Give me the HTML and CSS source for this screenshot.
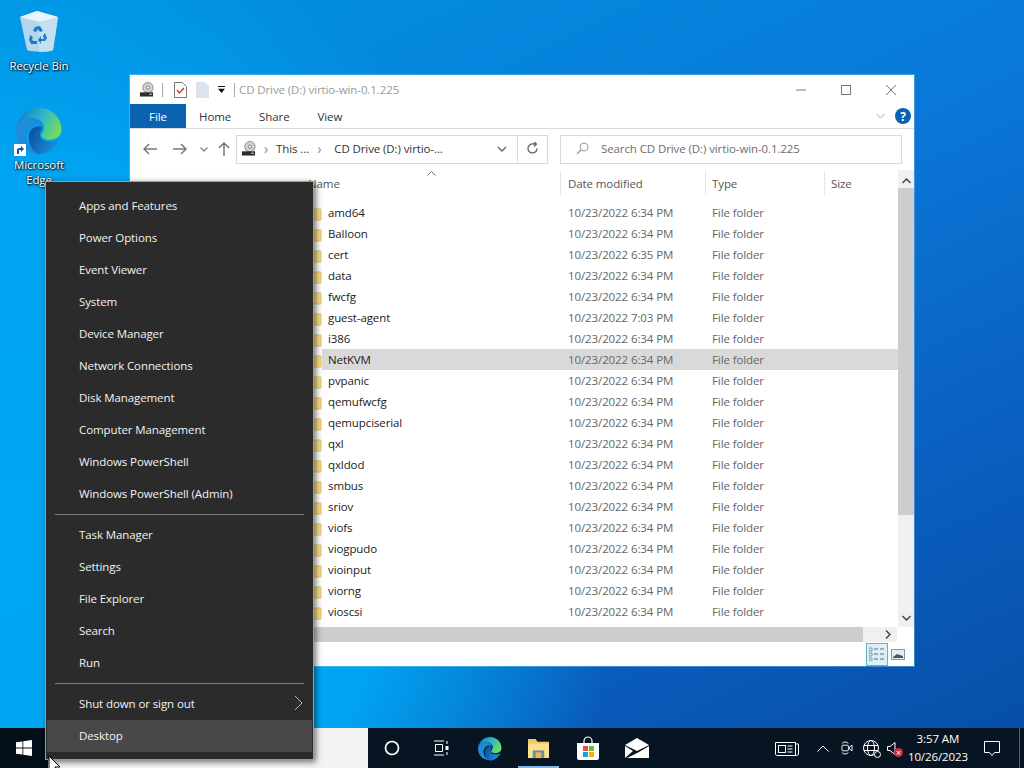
FILE: index.html
```html
<!DOCTYPE html>
<html lang="en">
<head>
    <meta charset="UTF-8">
    <title>CD Drive (D:) virtio-win-0.1.225</title>
    <link rel="stylesheet" href="styles.css">
</head>
<body>
    <svg class="defs" width="0" height="0">
        <defs>
            <linearGradient id="edgeTop" x1="0" y1="0.2" x2="1" y2="0.6">
                <stop offset="0" stop-color="#0f78bd"/>
                <stop offset="0.5" stop-color="#2fb4cf"/>
                <stop offset="1" stop-color="#72de5a"/>
            </linearGradient>
            <linearGradient id="edgeLow" x1="0" y1="0" x2="1" y2="0.5">
                <stop offset="0" stop-color="#0b4a96"/>
                <stop offset="1" stop-color="#1b8de0"/>
            </linearGradient>
            <symbol id="edge" viewBox="0 0 48 48">
                <path d="M2 22C5 9 14 2 25 2c13 0 22 10 22 21 0 6-5 10-12 10-5 0-8-2-8-4s3-3 3-8c0-6-7-10-14-9C9 13 4 17 2 22z" fill="url(#edgeTop)"/>
                <path d="M2 22c2-6 8-10 15-10 6 0 11 3 12 7-7-3-15 1-16 9-1 8 3 14 10 18C11 46 1 36 2 22z" fill="#1e8cd8"/>
                <path d="M15 30c0-7 6-11 13-10 0 4-2 6-2 8 0 5 5 7 10 7 4 0 7-1 9-3-3 9-12 15-20 15-6-1-10-9-10-17z" fill="url(#edgeLow)"/>
            </symbol>
            <symbol id="drive" viewBox="0 0 16 16">
                <circle cx="9.500" cy="6" r="5.500" fill="#d2d2d2" stroke="#858585"/>
                <circle cx="9.500" cy="6" r="1.700" fill="#fff" stroke="#777"/>
                <rect x="1" y="11" width="14" height="4.500" fill="#2e2e2e"/>
                <rect x="11" y="12.500" width="2.500" height="1" fill="#fff"/>
            </symbol>
            <symbol id="folder" viewBox="0 0 18 16">
                <path d="M1 2h6l2 2h8v11H1z" fill="#fbe08a" stroke="#e3c46a"/>
            </symbol>
        </defs>
    </svg>

    <div class="screen">
        <div class="desktop">
            <div class="shortcut bin-shortcut">
                <svg width="40" height="42" viewBox="0 0 40 42">
                    <path d="M1 7L18 1l21 6-5 33c-1 2-24 2-26 0z" fill="#b4d6ea"/>
                    <path d="M1 7L18 1l21 6-18 5z" fill="#eaf5fb"/>
                    <path d="M20 12l19-5-5 33c-2 1-8 2-14 2z" fill="#c4dfee"/>
                    <path d="M16 17l5-1 3 5-3 1-2-3-2 3-3-1zM26 23l2 5-2 3h-4v3l-3-4 3-4v3h3l-1-3zM11 25l3 2-1 2 1 2h4v3h-6l-2-4z" fill="#1c7ccb"/>
                </svg>
                <span>Recycle Bin</span>
            </div>
            <div class="shortcut edge-shortcut">
                <div class="edge-logo">
                    <svg width="50" height="49"><use href="#edge"/></svg>
                    <div class="link-badge">
                        <svg width="10" height="10" viewBox="0 0 10 10"><path d="M2 9V5c0-1 1-2 2-2h2V1l3 3-3 3V5H4v4z" fill="#1a4f95"/></svg>
                    </div>
                </div>
                <span>Microsoft Edge</span>
            </div>

            <div class="window">
                <div class="title-bar">
                    <svg class="qa-drive" width="15" height="15"><use href="#drive"/></svg>
                    <i class="qa-sep"></i>
                    <svg class="qa-check" width="13" height="16" viewBox="0 0 13 16">
                        <path d="M.5.500h8l4 4v11H.5z" fill="#fff" stroke="#777"/>
                        <path d="M3 8l2.500 3L10 6" fill="none" stroke="#d0382c" stroke-width="1.400"/>
                    </svg>
                    <svg class="qa-blank" width="13" height="16" viewBox="0 0 13 16">
                        <path d="M0 0h9l4 4v12H0z" fill="#dbe3ec"/>
                    </svg>
                    <svg class="qa-more" width="7" height="7" viewBox="0 0 8 8">
                        <path d="M0 0h8v1H0zM0 3h8L4 8z" fill="#111"/>
                    </svg>
                    <i class="qa-sep qa-sep-last"></i>
                    <span class="title-text">CD Drive (D:) virtio-win-0.1.225</span>
                    <div class="win-controls">
                        <svg width="10" height="10" viewBox="0 0 10 10"><path d="M0 5h10" stroke="#777"/></svg>
                        <svg width="10" height="10" viewBox="0 0 10 10"><rect x=".5" y=".5" width="9" height="9" fill="none" stroke="#777"/></svg>
                        <svg width="10" height="10" viewBox="0 0 10 10"><path d="M0 0l10 10M10 0L0 10" stroke="#777"/></svg>
                    </div>
                </div>

                <div class="ribbon">
                    <div class="tab tab-file">File</div>
                    <div class="tab tab-home">Home</div>
                    <div class="tab tab-share">Share</div>
                    <div class="tab tab-view">View</div>
                    <svg class="ribbon-chevron" width="9" height="6" viewBox="0 0 9 6"><path d="M.5 1l4 4 4-4" fill="none" stroke="#aaa"/></svg>
                    <div class="help">?</div>
                </div>

                <div class="nav-row">
                    <div class="nav-buttons">
                        <svg width="14" height="12" viewBox="0 0 14 12"><path d="M14 6H1M6 1L1 6l5 5" fill="none" stroke="#777" stroke-width="1.500"/></svg>
                        <svg class="nav-forward" width="14" height="12" viewBox="0 0 14 12"><path d="M0 6h13M8 1l5 5-5 5" fill="none" stroke="#777" stroke-width="1.500"/></svg>
                        <svg class="nav-recent" width="8" height="5" viewBox="0 0 8 5"><path d="M.5.500L4 4 7.500.500" fill="none" stroke="#888" stroke-width="1.300"/></svg>
                        <svg class="nav-up" width="12" height="14" viewBox="0 0 12 14"><path d="M6 14V1M1 6l5-5 5 5" fill="none" stroke="#777" stroke-width="1.500"/></svg>
                    </div>
                    <div class="address">
                        <svg class="addr-drive" width="15" height="15"><use href="#drive"/></svg>
                        <span class="crumb-arrow">›</span>
                        <span class="crumb crumb-pc">This ...</span>
                        <span class="crumb-arrow">›</span>
                        <span class="crumb crumb-cd">CD Drive (D:) virtio-...</span>
                        <svg class="addr-chevron" width="10" height="6" viewBox="0 0 10 6"><path d="M1 1l4 4 4-4" fill="none" stroke="#666" stroke-width="1.400"/></svg>
                        <div class="refresh">
                            <svg width="13" height="13" viewBox="0 0 13 13"><path d="M11 6.500A4.500 4.500 0 1 1 7 2H10M8 0l2.500 2L8 4.500" fill="none" stroke="#666" stroke-width="1.300"/></svg>
                        </div>
                    </div>
                    <div class="search">
                        <svg width="13" height="13" viewBox="0 0 13 13"><circle cx="8" cy="5" r="4" fill="none" stroke="#999"/><path d="M5 8l-4 4" stroke="#999" stroke-width="1.300"/></svg>
                        <span>Search CD Drive (D:) virtio-win-0.1.225</span>
                    </div>
                </div>

                <div class="browser">
                    <div class="file-pane">
                        <div class="sort-caret">
                            <svg width="9" height="5" viewBox="0 0 9 5"><path d="M.5 4.500L4.500.5l4 4" fill="none" stroke="#777"/></svg>
                        </div>
                        <div class="col-heads">
                            <div class="col-head col-name">Name</div>
                            <div class="col-head col-date">Date modified</div>
                            <div class="col-head col-type">Type</div>
                            <div class="col-head col-size">Size</div>
                        </div>
                        <div class="rows">
                            <div class="row"><div class="row-icon"><svg width="18" height="16"><use href="#folder"/></svg></div><div class="row-info"><span class="file-name">amd64</span><span>10/23/2022 6:34 PM</span><span>File folder</span></div></div>
                            <div class="row"><div class="row-icon"><svg width="18" height="16"><use href="#folder"/></svg></div><div class="row-info"><span class="file-name">Balloon</span><span>10/23/2022 6:34 PM</span><span>File folder</span></div></div>
                            <div class="row"><div class="row-icon"><svg width="18" height="16"><use href="#folder"/></svg></div><div class="row-info"><span class="file-name">cert</span><span>10/23/2022 6:35 PM</span><span>File folder</span></div></div>
                            <div class="row"><div class="row-icon"><svg width="18" height="16"><use href="#folder"/></svg></div><div class="row-info"><span class="file-name">data</span><span>10/23/2022 6:34 PM</span><span>File folder</span></div></div>
                            <div class="row"><div class="row-icon"><svg width="18" height="16"><use href="#folder"/></svg></div><div class="row-info"><span class="file-name">fwcfg</span><span>10/23/2022 6:34 PM</span><span>File folder</span></div></div>
                            <div class="row"><div class="row-icon"><svg width="18" height="16"><use href="#folder"/></svg></div><div class="row-info"><span class="file-name">guest-agent</span><span>10/23/2022 7:03 PM</span><span>File folder</span></div></div>
                            <div class="row"><div class="row-icon"><svg width="18" height="16"><use href="#folder"/></svg></div><div class="row-info"><span class="file-name">i386</span><span>10/23/2022 6:34 PM</span><span>File folder</span></div></div>
                            <div class="row row-selected"><div class="row-icon"><svg width="18" height="16"><use href="#folder"/></svg></div><div class="row-info"><span class="file-name">NetKVM</span><span>10/23/2022 6:34 PM</span><span>File folder</span></div></div>
                            <div class="row"><div class="row-icon"><svg width="18" height="16"><use href="#folder"/></svg></div><div class="row-info"><span class="file-name">pvpanic</span><span>10/23/2022 6:34 PM</span><span>File folder</span></div></div>
                            <div class="row"><div class="row-icon"><svg width="18" height="16"><use href="#folder"/></svg></div><div class="row-info"><span class="file-name">qemufwcfg</span><span>10/23/2022 6:34 PM</span><span>File folder</span></div></div>
                            <div class="row"><div class="row-icon"><svg width="18" height="16"><use href="#folder"/></svg></div><div class="row-info"><span class="file-name">qemupciserial</span><span>10/23/2022 6:34 PM</span><span>File folder</span></div></div>
                            <div class="row"><div class="row-icon"><svg width="18" height="16"><use href="#folder"/></svg></div><div class="row-info"><span class="file-name">qxl</span><span>10/23/2022 6:34 PM</span><span>File folder</span></div></div>
                            <div class="row"><div class="row-icon"><svg width="18" height="16"><use href="#folder"/></svg></div><div class="row-info"><span class="file-name">qxldod</span><span>10/23/2022 6:34 PM</span><span>File folder</span></div></div>
                            <div class="row"><div class="row-icon"><svg width="18" height="16"><use href="#folder"/></svg></div><div class="row-info"><span class="file-name">smbus</span><span>10/23/2022 6:34 PM</span><span>File folder</span></div></div>
                            <div class="row"><div class="row-icon"><svg width="18" height="16"><use href="#folder"/></svg></div><div class="row-info"><span class="file-name">sriov</span><span>10/23/2022 6:34 PM</span><span>File folder</span></div></div>
                            <div class="row"><div class="row-icon"><svg width="18" height="16"><use href="#folder"/></svg></div><div class="row-info"><span class="file-name">viofs</span><span>10/23/2022 6:34 PM</span><span>File folder</span></div></div>
                            <div class="row"><div class="row-icon"><svg width="18" height="16"><use href="#folder"/></svg></div><div class="row-info"><span class="file-name">viogpudo</span><span>10/23/2022 6:34 PM</span><span>File folder</span></div></div>
                            <div class="row"><div class="row-icon"><svg width="18" height="16"><use href="#folder"/></svg></div><div class="row-info"><span class="file-name">vioinput</span><span>10/23/2022 6:34 PM</span><span>File folder</span></div></div>
                            <div class="row"><div class="row-icon"><svg width="18" height="16"><use href="#folder"/></svg></div><div class="row-info"><span class="file-name">viorng</span><span>10/23/2022 6:34 PM</span><span>File folder</span></div></div>
                            <div class="row"><div class="row-icon"><svg width="18" height="16"><use href="#folder"/></svg></div><div class="row-info"><span class="file-name">vioscsi</span><span>10/23/2022 6:34 PM</span><span>File folder</span></div></div>
                        </div>
                    </div>
                    <div class="vbar">
                        <svg class="vbar-arrow" width="9" height="6" viewBox="0 0 9 6"><path d="M.5 5l4-4 4 4" fill="none" stroke="#444" stroke-width="1.500"/></svg>
                        <div class="vbar-thumb"></div>
                        <svg class="vbar-arrow vbar-arrow-down" width="9" height="6" viewBox="0 0 9 6"><path d="M.5 1l4 4 4-4" fill="none" stroke="#444" stroke-width="1.500"/></svg>
                    </div>
                </div>

                <div class="hbar">
                    <div class="hbar-thumb"></div>
                    <svg class="hbar-arrow" width="6" height="9" viewBox="0 0 6 9"><path d="M1 .5l4 4-4 4" fill="none" stroke="#444" stroke-width="1.500"/></svg>
                </div>

                <div class="status-bar">
                    <div class="view-btn view-btn-on">
                        <svg width="16" height="14" viewBox="0 0 16 14"><path d="M0 1h3v3H0zM0 6h3v3H0zM0 11h3v3H0z" fill="none" stroke="#777" stroke-width=".7"/><path d="M5 2h4M11 2h4M5 7h4M11 7h4M5 12h4M11 12h4" stroke="#666"/></svg>
                    </div>
                    <div class="view-btn">
                        <svg width="14" height="11" viewBox="0 0 14 11"><rect x=".5" y=".5" width="13" height="10" fill="#e6eef4" stroke="#8a96a0"/><path d="M2 8l4-3 6 2v2H2z" fill="#3f5b6a"/></svg>
                    </div>
                </div>
            </div>

            <div class="winx-menu">
                <div class="menu-group">
                    <div class="menu-item">Apps and Features</div>
                    <div class="menu-item">Power Options</div>
                    <div class="menu-item">Event Viewer</div>
                    <div class="menu-item">System</div>
                    <div class="menu-item">Device Manager</div>
                    <div class="menu-item">Network Connections</div>
                    <div class="menu-item">Disk Management</div>
                    <div class="menu-item">Computer Management</div>
                    <div class="menu-item">Windows PowerShell</div>
                    <div class="menu-item">Windows PowerShell (Admin)</div>
                </div>
                <div class="menu-line"></div>
                <div class="menu-group">
                    <div class="menu-item">Task Manager</div>
                    <div class="menu-item">Settings</div>
                    <div class="menu-item">File Explorer</div>
                    <div class="menu-item">Search</div>
                    <div class="menu-item">Run</div>
                </div>
                <div class="menu-line"></div>
                <div class="menu-group">
                    <div class="menu-item menu-item-sub">
                        <span>Shut down or sign out</span>
                        <svg width="9" height="16" viewBox="0 0 9 16"><path d="M1 1l7 7-7 7" fill="none" stroke="#bbb"/></svg>
                    </div>
                    <div class="menu-item menu-item-hover">Desktop</div>
                </div>
            </div>

            <svg class="cursor" width="13" height="20" viewBox="0 0 13 20">
                <path d="M1 1v16l4-4 3 6 2-1-3-6h5z" fill="#fff" stroke="#000"/>
            </svg>
        </div>

        <div class="taskbar">
            <div class="start">
                <svg width="16" height="16" viewBox="0 0 16 16"><path d="M0 2.300l6.500-.9v6.200H0zM7.300 1.300L16 0v7.600H7.300zM0 8.400h6.500v6.200L0 13.700zM7.300 8.400H16V16l-8.700-1.300z" fill="#fff"/></svg>
            </div>
            <div class="search-box"></div>
            <div class="task-icons">
                <div class="task-icon">
                    <svg width="16" height="16" viewBox="0 0 16 16"><circle cx="8" cy="8" r="6.500" fill="none" stroke="#fff" stroke-width="1.700"/></svg>
                </div>
                <div class="task-icon">
                    <svg width="16" height="16" viewBox="0 0 16 16"><path d="M1 1h10M1 15h10M2.500 4.500h7v7h-7z" fill="none" stroke="#fff"/><path d="M14 1v3M14 12v3" stroke="#fff"/><rect x="12.500" y="6" width="3" height="4" fill="#fff"/></svg>
                </div>
                <div class="task-icon">
                    <svg width="25" height="25"><use href="#edge"/></svg>
                </div>
                <div class="task-icon task-icon-open">
                    <svg width="23" height="21" viewBox="0 0 24 22">
                        <path d="M1 1h8l2 3h12v17H1z" fill="#f4c95d"/>
                        <path d="M1 6h22v15H1z" fill="#fbe08d"/>
                        <rect x="6" y="13" width="12" height="8" fill="#6f8ca5"/>
                        <rect x="9" y="15" width="6" height="6" fill="#e3b95a"/>
                    </svg>
                </div>
                <div class="task-icon">
                    <svg width="24" height="24" viewBox="0 0 24 24">
                        <path d="M8 7V5a4 4 0 0 1 8 0v2" fill="none" stroke="#fff" stroke-width="1.200"/>
                        <path d="M1 7h22v15c0 1-1 2-2 2H3c-1 0-2-1-2-2z" fill="#fff"/>
                        <rect x="7" y="10" width="5" height="5" fill="#e8502c"/>
                        <rect x="13" y="10" width="5" height="5" fill="#72b82c"/>
                        <rect x="7" y="16" width="5" height="5" fill="#1d9fe8"/>
                        <rect x="13" y="16" width="5" height="5" fill="#f7b500"/>
                    </svg>
                </div>
                <div class="task-icon">
                    <svg width="24" height="20" viewBox="0 0 24 20">
                        <path d="M0 7l12-7 12 7-12 6z" fill="#fff"/>
                        <path d="M0 8l8 5-8 7zM24 8v12H2l12-6z" fill="#fff"/>
                    </svg>
                </div>
            </div>
            <div class="tray">
                <svg class="tray-news" width="24" height="16" viewBox="0 0 24 16">
                    <path d="M.5 2.500h20v13H2c-1 0-1.500-.5-1.500-1.500z" fill="none" stroke="#fff"/>
                    <path d="M20.500 4h3v10c0 1-1 1.500-3 1.500" fill="none" stroke="#fff"/>
                    <rect x="3.500" y="5.500" width="7" height="7" fill="none" stroke="#fff"/>
                    <path d="M12.500 6h5M12.500 9h5M12.500 12h5" stroke="#fff"/>
                </svg>
                <svg class="tray-up" width="12" height="7" viewBox="0 0 12 7"><path d="M.5 6.500L6 1l5.500 5.500" fill="none" stroke="#fff"/></svg>
                <svg class="tray-meet" width="12" height="16" viewBox="0 0 13 16">
                    <path d="M1 3c2-2 5-2 7 0M1 13c2 2 5 2 7 0" fill="none" stroke="#fff"/>
                    <rect x="1" y="5" width="7" height="6" rx="1" fill="none" stroke="#fff"/>
                    <path d="M9 7l3-2v6l-3-2z" fill="none" stroke="#fff"/>
                </svg>
                <div class="tray-globe">
                    <svg width="16" height="16" viewBox="0 0 16 16">
                        <circle cx="8" cy="8" r="7.500" fill="none" stroke="#fff"/>
                        <ellipse cx="8" cy="8" rx="3.500" ry="7.500" fill="none" stroke="#fff"/>
                        <path d="M1 5.500h14M1 10.500h14" stroke="#fff"/>
                    </svg>
                    <i class="globe-badge"></i>
                </div>
                <div class="tray-sound">
                    <svg width="10" height="13" viewBox="0 0 10 13"><path d="M.5 4.500h2.500L8 .5v12L3 8.500H.5z" fill="none" stroke="#fff"/></svg>
                    <i class="mute-badge">×</i>
                </div>
                <div class="clock">
                    <span>3:57 AM</span>
                    <span>10/26/2023</span>
                </div>
                <svg class="tray-note" width="16" height="15" viewBox="0 0 16 15">
                    <path d="M.5.500h15v11h-5l-2.500 3-2.500-3h-5z" fill="none" stroke="#fff"/>
                </svg>
                <i class="show-desktop"></i>
            </div>
        </div>
    </div>
</body>
</html>
```

FILE: styles.css
```css
* {
    box-sizing: border-box;
}

html, body {
    margin: 0;
    height: 100%;
    overflow: hidden;
}

body {
    font-family: "Open Sans", "Noto Sans", sans-serif;
    font-size: 11.5px;
    letter-spacing: -0.1px;
}

.defs {
    position: absolute;
}

i {
    display: block;
}

.screen {
    display: flex;
    flex-direction: column;
    width: 1024px;
    height: 768px;
}

.desktop {
    position: relative;
    flex: 1;
    background:
        radial-gradient(ellipse 620px 620px at 0% 75%, #00a6f3 0%, #00a4f1 62%, rgba(0, 150, 235, 0) 100%),
        linear-gradient(155deg, #0094e2 0%, #0a78d8 45%, #0a5fc0 75%, #074fa8 100%);
}

/* desktop icons */
.shortcut {
    position: absolute;
    display: flex;
    flex-direction: column;
    align-items: center;
    width: 74px;
    color: #fff;
    text-align: center;
    line-height: 15px;
    text-shadow: 0 0 2px #000, 1px 1px 2px #000;
}

.bin-shortcut {
    left: 2px;
    top: 10px;
}

.bin-shortcut span {
    margin-top: 6px;
}

.edge-shortcut {
    left: 2px;
    top: 106px;
}

.edge-shortcut span {
    margin-top: 2px;
}

.edge-logo {
    position: relative;
    width: 50px;
    height: 49px;
    margin-right: 2px;
}

.link-badge {
    position: absolute;
    left: 1px;
    bottom: -1px;
    display: flex;
    align-items: center;
    justify-content: center;
    width: 12px;
    height: 12px;
    background: #fff;
}

/* explorer window */
.window {
    position: absolute;
    left: 130px;
    top: 75px;
    display: flex;
    flex-direction: column;
    width: 784px;
    height: 591px;
    background: #fff;
    color: #333;
    box-shadow: 0 0 0 1px rgba(160, 220, 245, 0.35);
}

.title-bar {
    display: flex;
    align-items: center;
    height: 29px;
    padding-left: 9px;
}

.qa-sep {
    width: 1px;
    height: 14px;
    margin-left: 8px;
    background: #aaa;
}

.qa-check {
    margin-left: 11px;
}

.qa-blank {
    margin-left: 9px;
}

.qa-more {
    margin-left: 9px;
}

.qa-sep-last {
    margin-left: 9px;
}

.title-text {
    margin-left: 4px;
    color: #9a9a9a;
}

.win-controls {
    display: flex;
    gap: 35px;
    margin-left: auto;
    margin-right: 18px;
}

.ribbon {
    display: flex;
    align-items: center;
    height: 25px;
    border-bottom: 1px solid #dadbdc;
}

.tab {
    display: flex;
    align-items: center;
    justify-content: center;
    height: 24px;
}

.tab-file {
    width: 56px;
    background: #0a62b0;
    color: #fff;
}

.tab-home {
    margin-left: 13px;
}

.tab-share {
    margin-left: 28px;
}

.tab-view {
    margin-left: 28px;
}

.ribbon-chevron {
    margin-left: auto;
}

.help {
    display: flex;
    align-items: center;
    justify-content: center;
    width: 16px;
    height: 16px;
    margin-left: 10px;
    margin-right: 3px;
    border-radius: 50%;
    background: #0a62b0;
    color: #fff;
    font-size: 12px;
    font-weight: 700;
}

.nav-row {
    display: flex;
    align-items: center;
    height: 41px;
    padding-bottom: 1px;
}

.nav-buttons {
    display: flex;
    align-items: center;
    width: 106px;
    padding-left: 13px;
    flex: none;
}

.nav-forward {
    margin-left: 16px;
}

.nav-recent {
    margin-left: 13px;
}

.nav-up {
    margin-left: 10px;
}

.address {
    display: flex;
    align-items: center;
    width: 312px;
    height: 29px;
    flex: none;
    padding-bottom: 1px;
    border: 1px solid #d9d9d9;
}

.addr-drive {
    margin-left: 4px;
}

.crumb-arrow {
    margin: 0 8px;
    color: #888;
    font-size: 14px;
}

.crumb-cd {
    margin-left: 5px;
}

.addr-chevron {
    margin-left: auto;
    margin-right: 10px;
}

.refresh {
    display: flex;
    align-items: center;
    justify-content: center;
    width: 30px;
    height: 100%;
    border-left: 1px solid #d9d9d9;
}

.search {
    display: flex;
    align-items: center;
    gap: 12px;
    width: 342px;
    height: 29px;
    margin-left: 12px;
    padding-left: 15px;
    padding-bottom: 1px;
    border: 1px solid #d9d9d9;
    color: #6d6d6d;
}

.browser {
    display: flex;
    height: 457px;
}

.file-pane {
    position: relative;
    flex: 1;
}

.sort-caret {
    position: absolute;
    left: 297px;
    top: 1px;
    line-height: 0;
}

.col-heads {
    display: flex;
    height: 28px;
    padding-top: 1px;
    padding-left: 172px;
    color: #555;
}

.col-head {
    display: flex;
    align-items: center;
    height: 24px;
    padding-left: 6px;
    border-right: 1px solid #e5e5e5;
}

.col-name {
    width: 259px;
}

.col-date {
    width: 145px;
    padding-left: 7px;
}

.col-type {
    width: 119px;
}

.col-size {
    flex: 1;
    border-right: 0;
}

.rows {
    padding-top: 4px;
}

.row {
    display: flex;
    height: 21px;
    color: #666;
}

.row-icon {
    display: flex;
    align-items: center;
    justify-content: flex-end;
    width: 192px;
}

.row-info {
    display: grid;
    grid-template-columns: 240px 144px 1fr;
    align-items: center;
    flex: 1;
    padding-left: 6px;
}

.file-name {
    color: #222;
}

.row-selected .row-info {
    background: #d9d9d9;
}

.vbar {
    position: relative;
    display: flex;
    flex-direction: column;
    align-items: center;
    width: 16px;
    background: #f0f0f0;
}

.vbar-arrow {
    margin-top: 8px;
}

.vbar-thumb {
    width: 100%;
    height: 327px;
    margin-top: 4px;
    background: #cdcdcd;
}

.vbar-arrow-down {
    margin-top: auto;
    margin-bottom: 6px;
}

.hbar {
    display: flex;
    align-items: center;
    height: 15px;
    background: #f0f0f0;
    margin-right: 17px;
}

.hbar-thumb {
    width: 733px;
    height: 100%;
    background: #cdcdcd;
}

.hbar-arrow {
    margin-left: 22px;
}

.status-bar {
    display: flex;
    justify-content: flex-end;
    align-items: center;
    height: 24px;
    padding-right: 6px;
}

.view-btn {
    display: flex;
    align-items: center;
    justify-content: center;
    width: 20px;
    height: 23px;
}

.view-btn-on {
    width: 22px;
    background: #d8f0f9;
    border: 1px solid #5db4c8;
}

/* win+x menu */
.winx-menu {
    position: absolute;
    left: 45px;
    top: 181px;
    width: 269px;
    height: 579px;
    padding: 8px 1px 0;
    background: #2b2b2b;
    border: 1px solid #9a9ea1;
    color: #f2f2f2;
    box-shadow: 2px 2px 6px rgba(0, 0, 0, 0.55);
}

.menu-item {
    display: flex;
    align-items: center;
    height: 32px;
    padding-left: 32px;
    padding-bottom: 2px;
}

.menu-item-sub {
    justify-content: space-between;
    padding-right: 9px;
}

.menu-item-hover {
    background: #484848;
}

.menu-line {
    height: 1px;
    margin: 4px 8px;
    background: #7b7b7b;
}

.cursor {
    position: absolute;
    left: 48px;
    top: 755px;
    z-index: 5;
}

/* taskbar */
.taskbar {
    display: flex;
    align-items: center;
    height: 40px;
    background: #071522;
    color: #fff;
}

.start {
    display: flex;
    align-items: center;
    justify-content: center;
    width: 48px;
    height: 100%;
    background: #031019;
}

.search-box {
    width: 320px;
    height: 100%;
    background: #f3f3f3;
}

.task-icons {
    display: flex;
    height: 100%;
}

.task-icon {
    position: relative;
    display: flex;
    align-items: center;
    justify-content: center;
    width: 49.2px;
    height: 100%;
}

.task-icon:first-child {
    width: 48px;
}

.task-icon-open::after {
    content: "";
    position: absolute;
    left: 4px;
    right: 5px;
    bottom: 0;
    height: 2px;
    background: #7cb8ea;
}

.tray {
    position: relative;
    display: flex;
    align-items: center;
    flex: 1;
    height: 100%;
}

.tray-news {
    margin-left: 113px;
}

.tray-up {
    margin-left: 18px;
}

.tray-meet {
    margin-left: 12px;
}

.tray-globe {
    position: relative;
    margin-left: 10px;
    line-height: 0;
}

.globe-badge {
    position: absolute;
    right: -2px;
    bottom: -2px;
    width: 7px;
    height: 7px;
    border-radius: 50%;
    border: 1px solid #fff;
    background: #071522;
}

.tray-sound {
    position: relative;
    margin-left: 8px;
    line-height: 0;
}

.mute-badge {
    position: absolute;
    left: 7px;
    top: 6px;
    width: 9px;
    height: 9px;
    border-radius: 50%;
    background: #c5303c;
    color: #fff;
    font-size: 9px;
    font-style: normal;
    line-height: 9px;
    text-align: center;
}

.clock {
    display: flex;
    flex-direction: column;
    align-items: center;
    width: 70px;
    margin-left: 6px;
    line-height: 18px;
}

.tray-note {
    margin-left: 11px;
}

.show-desktop {
    position: absolute;
    right: 4px;
    top: 0;
    width: 1px;
    height: 100%;
    background: #55606a;
}
```
